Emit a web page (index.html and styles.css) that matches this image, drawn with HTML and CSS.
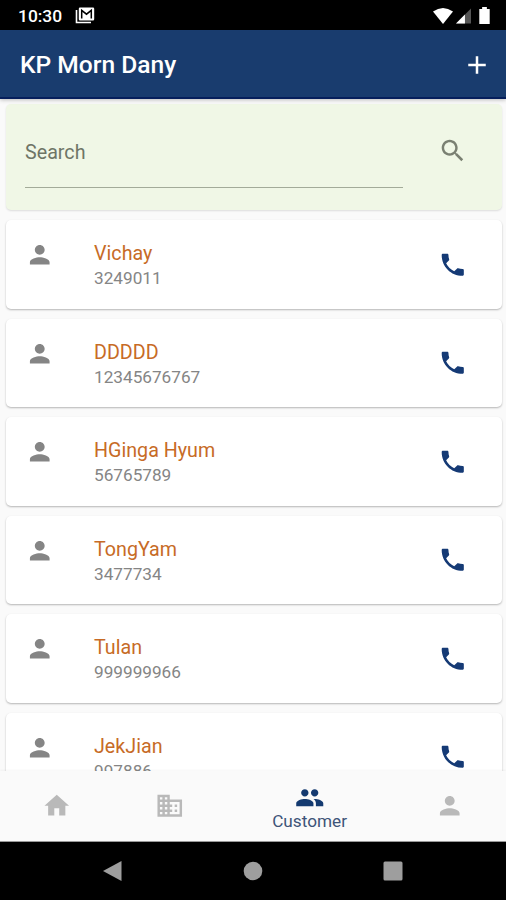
FILE: index.html
```
<!DOCTYPE html>
<html lang="en">
<head>
<meta charset="utf-8">
<title>KP Morn Dany</title>
<link rel="stylesheet" href="styles.css">
</head>
<body>
<svg class="defs" aria-hidden="true">
  <symbol id="person" viewBox="0 0 24 24"><path d="M12 12c2.210 0 4-1.790 4-4s-1.790-4-4-4-4 1.790-4 4 1.790 4 4 4zm0 2c-2.670 0-8 1.340-8 4v2h16v-2c0-2.660-5.330-4-8-4z"/></symbol>
  <symbol id="phone" viewBox="0 0 24 24"><path d="M6.620 10.790c1.440 2.830 3.760 5.140 6.590 6.590l2.200-2.200c.27-.27.67-.36 1.020-.24 1.120.37 2.330.57 3.570.57.55 0 1 .45 1 1V20c0 .55-.45 1-1 1-9.390 0-17-7.610-17-17 0-.55.45-1 1-1h3.500c.55 0 1 .45 1 1 0 1.250.2 2.450.57 3.570.11.35.03.74-.25 1.020l-2.200 2.200z"/></symbol>
</svg>
<div class="screen">
  <header class="status">
    <span class="time">10:30</span>
    <svg class="mail" viewBox="0 0 20 17"><path d="M1.500 3v12.500H16" fill="none" stroke="#fff" stroke-width="1.600"/><path fill="#fff" d="M5 .5h13a1.200 1.200 0 0 1 1.200 1.200v10.600a1.200 1.200 0 0 1-1.200 1.200H5a1.200 1.200 0 0 1-1.200-1.200V1.700A1.200 1.200 0 0 1 5 .5z"/><path d="M6.700 11.500V3.300l4.800 3.900 4.800-3.900v8.200" fill="none" stroke="#000" stroke-width="1.500"/></svg>
    <div class="signals">
      <svg class="wifi" viewBox="0 0 20 16"><path d="M0 3.500Q10-3.500 20 3.500L10 16z"/></svg>
      <svg class="cell" viewBox="0 0 16 16"><path fill="#555" d="M16 0v16H0z"/><path d="M9.500 6.500V16H0z"/></svg>
      <svg class="battery" viewBox="0 0 11 18"><path d="M3 0h5v2h3v16H0V2h3z"/></svg>
    </div>
  </header>
  <div class="appbar">
    <h1>KP Morn Dany</h1>
    <svg class="add" viewBox="0 0 24 24"><path d="M19 13h-6v6h-2v-6H5v-2h6V5h2v6h6v2z"/></svg>
  </div>
  <main class="content">
    <section class="card search">
      <div class="field">Search</div>
      <svg class="icon" viewBox="0 0 24 24"><path d="M15.500 14h-.79l-.28-.27C15.410 12.590 16 11.110 16 9.500 16 5.910 13.090 3 9.500 3S3 5.910 3 9.500 5.910 16 9.500 16c1.610 0 3.090-.59 4.230-1.570l.27.28v.79l5 4.990L20.490 19l-4.990-5zm-6 0C7.010 14 5 11.990 5 9.500S7.010 5 9.500 5 14 7.010 14 9.500 11.990 14 9.500 14z"/></svg>
    </section>
    <section class="card row"><svg class="icon who"><use href="#person"/></svg><div class="info"><div class="name">Vichay</div><div class="num">3249011</div></div><svg class="icon call"><use href="#phone"/></svg></section>
    <section class="card row"><svg class="icon who"><use href="#person"/></svg><div class="info"><div class="name">DDDDD</div><div class="num">12345676767</div></div><svg class="icon call"><use href="#phone"/></svg></section>
    <section class="card row"><svg class="icon who"><use href="#person"/></svg><div class="info"><div class="name">HGinga Hyum</div><div class="num">56765789</div></div><svg class="icon call"><use href="#phone"/></svg></section>
    <section class="card row"><svg class="icon who"><use href="#person"/></svg><div class="info"><div class="name">TongYam</div><div class="num">3477734</div></div><svg class="icon call"><use href="#phone"/></svg></section>
    <section class="card row"><svg class="icon who"><use href="#person"/></svg><div class="info"><div class="name">Tulan</div><div class="num">999999966</div></div><svg class="icon call"><use href="#phone"/></svg></section>
    <section class="card row"><svg class="icon who"><use href="#person"/></svg><div class="info"><div class="name">JekJian</div><div class="num">997886</div></div><svg class="icon call"><use href="#phone"/></svg></section>
  </main>
  <nav class="tabs">
    <div class="tab"><svg class="icon" viewBox="0 0 24 24"><path d="M10 20v-6h4v6h5v-8h3L12 3 2 12h3v8z"/></svg></div>
    <div class="tab"><svg class="icon" viewBox="0 0 24 24"><path d="M12 7V3H2v18h20V7H12zM6 19H4v-2h2v2zm0-4H4v-2h2v2zm0-4H4V9h2v2zm0-4H4V5h2v2zm4 12H8v-2h2v2zm0-4H8v-2h2v2zm0-4H8V9h2v2zm0-4H8V5h2v2zm10 12h-8v-2h2v-2h-2v-2h2v-2h-2V9h8v10zm-2-8h-2v2h2v-2zm0 4h-2v2h2v-2z"/></svg></div>
    <div class="tab active"><svg class="icon" viewBox="0 0 24 24"><path d="M16 11c1.660 0 2.990-1.340 2.990-3S17.660 5 16 5s-3 1.340-3 3 1.340 3 3 3zm-8 0c1.660 0 2.990-1.340 2.990-3S9.660 5 8 5 5 6.340 5 8s1.340 3 3 3zm0 2c-2.330 0-7 1.170-7 3.500V19h14v-2.500c0-2.330-4.670-3.500-7-3.500zm8 0c-.29 0-.62.02-.97.05 1.160.84 1.970 1.970 1.970 3.450V19h6v-2.500c0-2.330-4.670-3.500-7-3.500z"/></svg><span>Customer</span></div>
    <div class="tab"><svg class="icon"><use href="#person"/></svg></div>
  </nav>
  <footer class="system">
    <svg viewBox="0 0 20 20"><path d="M18.500 0v20L0 10z"/></svg>
    <svg viewBox="0 0 20 20"><circle cx="10" cy="10" r="9.300"/></svg>
    <svg viewBox="0 0 20 20"><rect x=".5" y=".5" width="19" height="19" rx="1.500"/></svg>
  </footer>
</div>
</body>
</html>
```
FILE: styles.css
```
* { box-sizing: border-box; }
body { margin: 0; font-family: Roboto, "Liberation Sans", sans-serif; background: #fafafa; }
.defs { display: none; }
svg { display: block; flex: none; fill: currentColor; }
.screen { width: 506px; height: 900px; display: flex; flex-direction: column; overflow: hidden; }

.status { height: 30px; flex: none; background: #000; color: #fff; display: flex; align-items: center; padding: 0 16px 0 18px; }
.time { width: 44px; font-size: 17.400px; font-weight: 500; line-height: 30px; padding-top: 2px; }
.mail { width: 20px; height: 17px; margin-left: 12.500px; }
.signals { margin-left: auto; display: flex; align-items: flex-end; gap: 3px; }
.wifi { width: 20px; height: 16px; }
.cell { width: 15px; height: 16px; margin-right: 5px; }
.battery { width: 11px; height: 17px; }

.appbar { height: 69px; flex: none; background: #193c6e; border-bottom: 2px solid #061f5c; color: #fff; display: flex; align-items: center; justify-content: space-between; padding: 3px 14px 0 20px; box-shadow: 0 1px 4px rgba(0,0,0,.25); z-index: 1; }
h1 { margin: 0; font-size: 24.600px; font-weight: 500; line-height: 30px; }
.add { width: 30px; height: 30px; }

.content { flex: 1; min-height: 0; overflow: hidden; padding: 5px 4px 0 6px; display: flex; flex-direction: column; gap: 9.900px; }
.card { flex: none; border-radius: 5px; background: #fff; box-shadow: 0 1px 2px rgba(0,0,0,.28); display: flex; }
.icon { width: 29.500px; height: 29.500px; }
.search { height: 106.400px; background: #f0f7e6; color: #7a8072; justify-content: space-between; padding: 19px 34.500px 0 19px; box-shadow: 0 1px 2px rgba(0,0,0,.12); }
.search .icon { margin-top: 13px; }
.field { width: 378px; height: 65px; border-bottom: 1.500px solid #a3ab99; font-size: 19.700px; line-height: 24px; padding-top: 18px; color: #6e7566; }
.row { height: 88.600px; padding: 0 34.500px 0 19px; }
.who { color: #858585; margin-top: 20px; }
.info { margin: 21px 0 0 39.500px; flex: 1; }
.name { font-size: 19.700px; line-height: 25px; color: #c76b26; }
.num { font-size: 17.200px; line-height: 25px; color: #858585; }
.call { color: #153a75; align-self: center; }

.tabs { height: 71px; flex: none; background: #fafafa; border-bottom: 1px solid #999; display: flex; color: #b9b9b9; z-index: 1; box-shadow: 0 -1px 2px rgba(0,0,0,.04); padding-left: 1px; }
.tab { flex: 1; display: flex; flex-direction: column; align-items: center; justify-content: center; }
.tab.active { flex: 1.500; color: #143a70; justify-content: flex-start; padding-top: 11.500px; }
.tab span { font-size: 17.200px; line-height: 20px; margin-top: -1px; color: #3e5478; }

.system { height: 58px; flex: none; background: #000; color: #9e9e9e; display: flex; justify-content: center; gap: 120px; align-items: center; }
.system svg { width: 20px; height: 20px; }
```
